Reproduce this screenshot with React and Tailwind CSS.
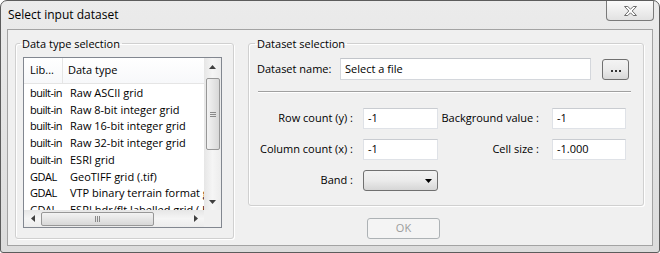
export default function App() {
  const rows = [
    ["built-in", "Raw ASCII grid"],
    ["built-in", "Raw 8-bit integer grid"],
    ["built-in", "Raw 16-bit integer grid"],
    ["built-in", "Raw 32-bit integer grid"],
    ["built-in", "ESRI grid"],
    ["GDAL", "GeoTIFF grid (.tif)"],
    ["GDAL", "VTP binary terrain format grid (.bt)"],
    ["GDAL", "ESRI hdr/flt labelled grid (.hdr)"],
  ];
  const input =
    "h-[21px] bg-white border border-[#dfe2e7] border-t-[#c9ccd1] flex items-center pl-[4px]";
  return (
    <div className="w-[660px] h-[253px] font-['Open_Sans',sans-serif] text-[11px] text-black">
      <div className="w-full h-full flex flex-col border border-[#5c5c5c] rounded-t-[7px] rounded-b-[3px] bg-gradient-to-b from-[#ebebeb] to-[#dcdcdc] overflow-hidden">
        {/* title bar */}
        <div className="h-[28px] flex justify-between">
          <div className="pl-[7px] pt-[5px] text-[12px] leading-[18px]">Select input dataset</div>
          <div className="mr-[5px] w-[48px] h-[20px] border border-t-0 border-[#7a7a7a] rounded-b-[4px] bg-gradient-to-b from-[#fbfbfb] to-[#e2e2e2] flex items-center justify-center">
            <svg width="13" height="10" viewBox="0 0 13 10">
              <polygon
                points="0.5,0.5 3.8,0.5 6.5,3.2 9.2,0.5 12.5,0.5 8.2,5 12.5,9.5 9.2,9.5 6.5,6.8 3.8,9.5 0.5,9.5 4.8,5"
                fill="#ffffff"
                stroke="#6e6e6e"
                strokeWidth="1"
                strokeLinejoin="round"
              />
            </svg>
          </div>
        </div>
        {/* client */}
        <div className="flex-1 mx-[6px] mb-[6px] border border-[#a3a3a3] bg-[#f0f0f0] flex pt-[6px]">
          {/* left group */}
          <fieldset className="ml-[7px] w-[219px] h-[203px] border border-[#d0d0d0] rounded-[3px] shadow-[inset_1px_1px_0_#ffffff,1px_1px_0_#ffffff]">
            <legend className="ml-[4px] px-[2px] leading-[15px] text-[11px]">Data type selection</legend>
            <div className="ml-[7px] mt-[6px] w-[199px] h-[171px] border border-[#828790] bg-white grid grid-cols-[1fr_17px] grid-rows-[1fr_17px]">
              {/* list area */}
              <div className="overflow-hidden">
                <div className="h-[26px] flex border-b border-[#e5e5e5] bg-gradient-to-b from-[#ffffff] to-[#f7f8fa]">
                  <div className="w-[39px] border-r border-[#e5e5e5] pl-[6px] flex items-center">Lib...</div>
                  <div className="pl-[5px] flex items-center">Data type</div>
                </div>
                <div className="pt-[1px]">
                  {rows.map((r, i) => (
                    <div key={i} className="h-[16.7px] flex items-center whitespace-nowrap">
                      <div className="w-[40px] pl-[6px] shrink-0 tracking-[-0.5px]">{r[0]}</div>
                      <div className="pl-[6px]">{r[1]}</div>
                    </div>
                  ))}
                </div>
              </div>
              {/* vertical scrollbar */}
              <div className="bg-gradient-to-r from-[#e6e6e6] via-[#f5f5f5] to-[#ececec] flex flex-col items-center">
                <div className="h-[17px] w-full flex items-center justify-center">
                  <svg width="7" height="4" viewBox="0 0 7 4"><polygon points="3.5,0 7,4 0,4" fill="#3f3f3f" /></svg>
                </div>
                <div className="mt-[3px] w-[14px] h-[72px] border border-[#979797] rounded-[2px] bg-gradient-to-r from-[#f3f3f3] to-[#d8d8d8] flex flex-col items-center justify-center gap-[1px]">
                  <div className="w-[6px] h-[1px] bg-[#8a8a8a]" />
                  <div className="w-[6px] h-[1px] bg-[#8a8a8a]" />
                  <div className="w-[6px] h-[1px] bg-[#8a8a8a]" />
                </div>
                <div className="mt-auto h-[17px] w-full flex items-center justify-center">
                  <svg width="7" height="4" viewBox="0 0 7 4"><polygon points="0,0 7,0 3.5,4" fill="#3f3f3f" /></svg>
                </div>
              </div>
              {/* horizontal scrollbar */}
              <div className="bg-gradient-to-b from-[#e6e6e6] via-[#f5f5f5] to-[#ececec] flex items-center">
                <div className="w-[17px] h-full flex items-center justify-center">
                  <svg width="4" height="7" viewBox="0 0 4 7"><polygon points="0,3.5 4,0 4,7" fill="#3f3f3f" /></svg>
                </div>
                <div className="w-[113px] h-[14px] border border-[#979797] rounded-[2px] bg-gradient-to-b from-[#f3f3f3] to-[#d8d8d8] flex items-center justify-center gap-[1px]">
                  <div className="w-[1px] h-[6px] bg-[#8a8a8a]" />
                  <div className="w-[1px] h-[6px] bg-[#8a8a8a]" />
                  <div className="w-[1px] h-[6px] bg-[#8a8a8a]" />
                </div>
                <div className="ml-auto w-[17px] h-full flex items-center justify-center">
                  <svg width="4" height="7" viewBox="0 0 4 7"><polygon points="4,3.5 0,0 0,7" fill="#3f3f3f" /></svg>
                </div>
              </div>
              <div className="bg-[#f0f0f0]" />
            </div>
          </fieldset>

          {/* right column */}
          <div className="ml-[14px] flex flex-col">
            <fieldset className="w-[396px] h-[170px] border border-[#d0d0d0] rounded-[3px] shadow-[inset_1px_1px_0_#ffffff,1px_1px_0_#ffffff]">
              <legend className="ml-[6px] px-[2px] leading-[15px] text-[11px]">Dataset selection</legend>
              <div className="mt-[7px] flex items-center h-[22px]">
                <div className="w-[91px] pl-[8px]">Dataset name:</div>
                <div className="w-[251px] h-[22px] bg-white border border-[#d4d7dc] border-t-[#c2c5ca] flex items-center pl-[4px]">
                  Select a file
                </div>
                <div className="ml-[11px] w-[27px] h-[21px] border border-[#707070] rounded-[3px] bg-gradient-to-b from-[#f3f3f3] via-[#ebebeb] to-[#d8d8d8] flex items-end justify-center pb-[7px]">
                  <div className="flex gap-[2px]">
                    <div className="w-[2px] h-[2px] bg-[#333]" />
                    <div className="w-[2px] h-[2px] bg-[#333]" />
                    <div className="w-[2px] h-[2px] bg-[#333]" />
                  </div>
                </div>
              </div>
              <div className="mt-[11px] ml-[9px] w-[373px] border-t border-[#a0a0a0] border-b border-b-white" />
              <div className="mt-[15px] flex items-center">
                <div className="w-[104px] text-right">Row count (y) :</div>
                <div className={"ml-[10px] w-[75px] " + input}>-1</div>
                <div className="w-[101px] text-right">Background value :</div>
                <div className={"ml-[13px] w-[74px] " + input}>-1</div>
              </div>
              <div className="mt-[10px] flex items-center">
                <div className="w-[104px] text-right">Column count (x) :</div>
                <div className={"ml-[10px] w-[75px] " + input}>-1</div>
                <div className="w-[101px] text-right">Cell size :</div>
                <div className={"ml-[13px] w-[74px] " + input}>-1.000</div>
              </div>
              <div className="mt-[10px] flex items-center">
                <div className="w-[104px] text-right">Band :</div>
                <div className="ml-[10px] w-[75px] h-[21px] border border-[#707070] rounded-[3px] bg-gradient-to-b from-[#f2f2f2] via-[#ebebeb] to-[#d6d6d6] flex items-center justify-end pr-[5px]">
                  <svg width="7" height="4" viewBox="0 0 7 4"><polygon points="0,0 7,0 3.5,4" fill="#000" /></svg>
                </div>
              </div>
            </fieldset>
            <div className="mt-[12px] ml-[119px] w-[73px] h-[21px] border border-[#adb2b5] rounded-[3px] bg-[#f4f4f4] flex items-center justify-center text-[#9c9c9c]">
              OK
            </div>
          </div>
        </div>
      </div>
    </div>
  );
}
